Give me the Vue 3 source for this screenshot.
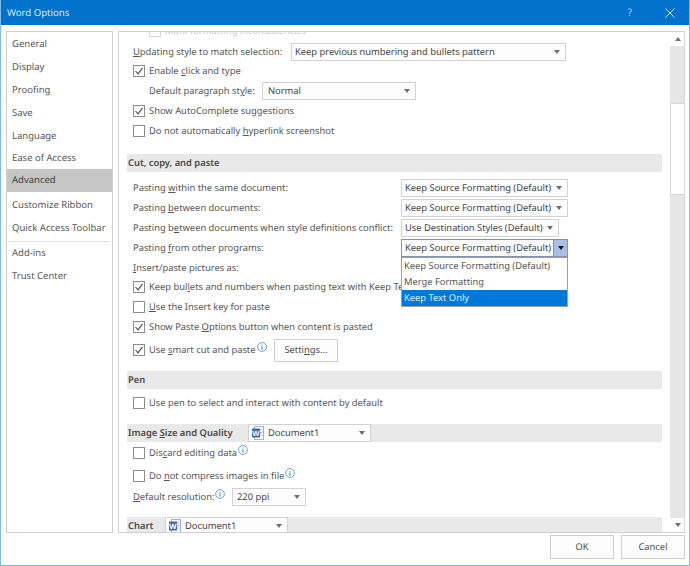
<script setup>
const nav1 = ['General', 'Display', 'Proofing', 'Save', 'Language', 'Ease of Access']
</script>

<template>
  <div class="dialog">
    <header class="title">
      <span class="title-text">Word Options</span>
      <span class="help">?</span>
      <svg class="close" width="10" height="10" viewBox="0 0 10 10"><path d="M.5 .5 9.500 9.500M9.500 .5 .5 9.500" stroke="#cfe6f7" stroke-width="1" fill="none"/></svg>
    </header>
    <div class="body">
      <nav class="side">
        <div v-for="n in nav1" :key="n" class="nav">{{ n }}</div>
        <div class="nav active">Advanced</div>
        <div class="nav gap">Customize Ribbon</div>
        <div class="nav">Quick Access Toolbar</div>
        <div class="sep"></div>
        <div class="nav">Add-ins</div>
        <div class="nav">Trust Center</div>
      </nav>
      <main class="panel">
        <div class="scroll">
          <div class="row faded first"><span class="cb faint"></span><span class="faint-text">Mark formatting inconsistencies</span></div>
          <div class="row r-upd"><span class="lab l-upd"><u>U</u>pdating style to match selection:</span><div class="sel s-upd"><span>Keep previous numbering and bullets pattern</span><i class="arr"></i></div></div>
          <div class="row"><span class="cb"><svg viewBox="0 0 10 10"><path d="M1.500 5 4 7.800 8.500 1.800" /></svg></span><span>Enable <u>c</u>lick and type</span></div>
          <div class="row ind"><span class="lab l-par">Default paragraph st<u>y</u>le:</span><div class="sel s-par"><span>Normal</span><i class="arr"></i></div></div>
          <div class="row"><span class="cb"><svg viewBox="0 0 10 10"><path d="M1.500 5 4 7.800 8.500 1.800" /></svg></span><span>Show AutoComplete suggestions</span></div>
          <div class="row"><span class="cb"></span><span>Do not automatically <u>h</u>yperlink screenshot</span></div>

          <div class="sec s-cut">Cut, copy, and paste</div>
          <div class="row paste"><span class="plab">Pasting <u>w</u>ithin the same document:</span><div class="sel s-src"><span>Keep Source Formatting (Default)</span><i class="arr"></i></div></div>
          <div class="row paste"><span class="plab">Pasting <u>b</u>etween documents:</span><div class="sel s-src"><span>Keep Source Formatting (Default)</span><i class="arr"></i></div></div>
          <div class="row paste"><span class="plab">Pasting b<u>e</u>tween documents when style definitions conflict:</span><div class="sel s-dst"><span>Use Destination Styles (Default)</span><i class="arr"></i></div></div>
          <div class="row paste">
            <span class="plab">Pasting <u>f</u>rom other programs:</span>
            <div class="sel s-src open"><span>Keep Source Formatting (Default)</span><b class="btn"><i class="arr dark"></i></b></div>
            <ul class="menu">
              <li>Keep Source Formatting (Default)</li>
              <li>Merge Formatting</li>
              <li class="on">Keep Text Only</li>
            </ul>
          </div>
          <div class="row r-ins"><span class="lab"><u>I</u>nsert/paste pictures as:</span></div>
          <div class="row"><span class="cb"><svg viewBox="0 0 10 10"><path d="M1.500 5 4 7.800 8.500 1.800" /></svg></span><span class="l-keep">Keep bul<u>l</u>ets and numbers when pasting text with Keep Te</span></div>
          <div class="row"><span class="cb"></span><span><u>U</u>se the Insert key for paste</span></div>
          <div class="row"><span class="cb"><svg viewBox="0 0 10 10"><path d="M1.500 5 4 7.800 8.500 1.800" /></svg></span><span>Show Paste <u>O</u>ptions button when content is pasted</span></div>
          <div class="row smart"><span class="cb"><svg viewBox="0 0 10 10"><path d="M1.500 5 4 7.800 8.500 1.800" /></svg></span><span class="l-smart">Use <u>s</u>mart cut and paste</span><svg class="info" viewBox="0 0 10 10"><circle cx="5" cy="5" r="4.400"/><path d="M5 2.600v1M5 4.400V7.600"/></svg><button class="settings">Setti<u>n</u>gs...</button></div>

          <div class="sec s-pen">Pen</div>
          <div class="row"><span class="cb"></span><span>Use pen to select and interact with content by default</span></div>

          <div class="sec s-img"><span class="l-img">Image <u>S</u>ize and Quality</span><div class="sel s-doc"><svg class="word" viewBox="0 0 14 14"><rect x="3.500" y="0.500" width="9" height="13" fill="#fff" stroke="#9fb2cc"/><path d="M9 4h2.500M9 6.500h2.500M9 9h2.500" stroke="#a8b4c4"/><rect x="1" y="2.500" width="8" height="9" fill="#3a67ad"/><text x="5" y="10" text-anchor="middle">W</text></svg><span>Document1</span><i class="arr"></i></div></div>
          <div class="row"><span class="cb"></span><span>Dis<u>c</u>ard editing data</span><svg class="info" viewBox="0 0 10 10"><circle cx="5" cy="5" r="4.400"/><path d="M5 2.600v1M5 4.400V7.600"/></svg></div>
          <div class="row r-comp"><span class="cb"></span><span>Do <u>n</u>ot compress images in file</span><svg class="info" viewBox="0 0 10 10"><circle cx="5" cy="5" r="4.400"/><path d="M5 2.600v1M5 4.400V7.600"/></svg></div>
          <div class="row r-res"><div class="l-res"><span class="lab"><u>D</u>efault resolution:</span><svg class="info res" viewBox="0 0 10 10"><circle cx="5" cy="5" r="4.400"/><path d="M5 2.600v1M5 4.400V7.600"/></svg></div><div class="sel s-ppi"><span>220 ppi</span><i class="arr"></i></div></div>
          <div class="sec s-chart"><span class="l-chart">Chart</span><div class="sel s-doc"><svg class="word" viewBox="0 0 14 14"><rect x="3.500" y="0.500" width="9" height="13" fill="#fff" stroke="#9fb2cc"/><path d="M9 4h2.500M9 6.500h2.500M9 9h2.500" stroke="#a8b4c4"/><rect x="1" y="2.500" width="8" height="9" fill="#3a67ad"/><text x="5" y="10" text-anchor="middle">W</text></svg><span>Document1</span><i class="arr"></i></div></div>
        </div>
        <div class="bar">
          <div class="bar-btn"><i class="up"></i></div>
          <div class="bar-track"><div class="thumb"></div></div>
          <div class="bar-btn"><i class="arr"></i></div>
        </div>
      </main>
    </div>
    <footer class="foot">
      <button class="act">OK</button>
      <button class="act">Cancel</button>
    </footer>
  </div>
</template>

<style scoped>
.dialog { width: 690px; height: 566px; box-sizing: border-box; border-left: 1px solid #7fbce6; border-right: 1px solid #7fbce6; border-bottom: 1px solid #7fb4cf; background: #fff; font: 9.350px/16px "Noto Sans", sans-serif; text-rendering: geometricPrecision; color: #555; display: flex; flex-direction: column; overflow: hidden; }
.title { height: 25px; margin: 0 -1px; background: #0072cc; color: #dcecf8; display: flex; align-items: center; padding: 0 15px 0 7px; flex: none; }
.title-text { font-size: 9.600px; flex: 1; }
.help { margin-right: 33px; font-size: 10.500px; color: #a9d0ee; }
.body { display: flex; height: 502px; margin-top: 6px; padding-left: 5px; gap: 5px; flex: none; }
.side { width: 107px; box-sizing: border-box; border: 1px solid #d0d0d0; padding-top: 1.400px; font-size: 9.500px; }
.nav { height: 22.800px; line-height: 22.800px; padding-left: 5px; white-space: nowrap; }
.nav.active { background: #c6c6c6; color: #3c3c3c; height: 23px; margin-top: -1.400px; }
.nav.gap { margin-top: 2.400px; }
.sep { height: 1px; background: #e0e0e0; margin: 1px 2px 0; }
.panel { width: 567px; box-sizing: border-box; border: 1px solid #d0d0d0; border-right: 1px solid #d8d8d8; display: flex; overflow: hidden; }
.scroll { width: 550px; flex: none; padding-left: 8px; box-sizing: border-box; position: relative; }
.row { height: 20px; display: flex; align-items: center; padding-left: 6px; white-space: nowrap; position: relative; }
.first { margin-top: -11px; }
.r-upd { height: 21px; margin-bottom: -1px; }
.ind { padding-left: 22px; }
.faint-text { color: #c8c8c8; }
.cb { width: 10px; height: 10px; border: 1px solid #8c8c8c; margin: -1px 4px 0 0; flex: none; display: block; background: #fff; }
.cb.faint { border-color: #d8d8d8; margin-left: 16px; }
.cb svg { width: 10px; height: 10px; display: block; }
.cb path { fill: none; stroke: #4a4a4a; stroke-width: 1.100; }
.sel { height: 18px; box-sizing: border-box; border: 1px solid #d2d2d2; background: #fdfdfd; display: flex; align-items: center; padding: 0 5px 0 3px; color: #444; position: relative; flex: none; }
.sel > span { flex: 1; overflow: hidden; white-space: nowrap; }
.arr { width: 0; height: 0; border: 3.500px solid transparent; border-top: 4px solid #707070; border-bottom: 0; display: block; flex: none; }
.arr.dark { border-top-color: #111; }
.l-upd { width: 158px; flex: none; }
.l-par { width: 113px; flex: none; }
.s-upd { width: 275px; }
.s-par { width: 154px; padding-left: 5px; }
.sec { height: 18px; margin-right: 7px; background: #e9e9e9; font-weight: 600; color: #4a4a4a; display: flex; align-items: center; padding-left: 1px; white-space: nowrap; }
.s-cut { margin-top: 13px; margin-bottom: 6px; }
.plab { width: 268px; flex: none; }
.s-src { width: 167px; }
.s-dst { width: 158px; }
.open { border-color: #7b93b8; }
.btn { position: absolute; right: 0; top: 0; bottom: 0; width: 13px; background: #a9c0e6; display: flex; align-items: center; justify-content: center; border-left: 1px solid #7b93b8; }
.menu { position: absolute; left: 268px; top: 19px; width: 167px; box-sizing: border-box; margin: 0 0 0 6px; padding: 0; list-style: none; background: #fff; border: 1px solid #a0a0a0; z-index: 2; }
.menu li { height: 16px; line-height: 16px; padding-left: 2px; color: #555; }
.menu li.on { background: #0078d7; color: #dff0fb; }
.r-ins { margin-bottom: -1px; }
.smart { height: 26px; }
.info { width: 10px; height: 10px; margin: -6px 0 0 1px; flex: none; }
.info circle { fill: #fff; stroke: #6aa5dc; stroke-width: 1; }
.info path { stroke: #3b7cc0; stroke-width: 1; fill: none; }
.l-smart { width: 107px; flex: none; }
.settings { width: 64px; height: 23px; margin-left: 7px; font: inherit; text-rendering: inherit; color: #505050; background: #fdfdfd; border: 1px solid #cfcfcf; padding: 0; }
.s-pen { margin-top: 8px; margin-bottom: 4px; }
.s-img { margin-top: 11px; margin-bottom: 1px; }
.l-img { width: 120px; flex: none; }
.l-chart { width: 37px; flex: none; }
.s-doc { width: 123px; padding-left: 2px; font-weight: 400; }
.word { width: 14px; height: 14px; margin-right: 3px; flex: none; }
.word text { font: 700 7.500px "Noto Sans", sans-serif; fill: #fff; }
.r-comp { margin-top: 3px; }
.r-res { margin-top: 1px; }
.l-res { width: 99px; flex: none; display: flex; align-items: center; }
.s-ppi { width: 74px; padding-left: 4px; }
.lab { flex: none; }
.info.res { margin-left: 0; }
.s-chart { margin-top: 10px; height: 18px; }
.bar { width: 15px; margin-left: 1px; flex: none; display: flex; flex-direction: column; background: #e6e6e6; }
.bar-btn { height: 14px; background: #fff; display: flex; align-items: center; justify-content: center; flex: none; }
.up { width: 0; height: 0; border: 3.500px solid transparent; border-bottom: 4px solid #707070; border-top: 0; display: block; }
.bar-track { flex: 1; padding-top: 57px; }
.thumb { height: 92px; background: #fff; border: 1px solid #d8d8d8; border-right: 0; box-sizing: border-box; }
.foot { display: flex; justify-content: flex-end; gap: 7px; padding: 2px 4px 0 0; }
.act { width: 64px; height: 24px; font: inherit; text-rendering: inherit; color: #505050; background: #fdfdfd; border: 1px solid #cfcfcf; padding: 0; }
</style>
